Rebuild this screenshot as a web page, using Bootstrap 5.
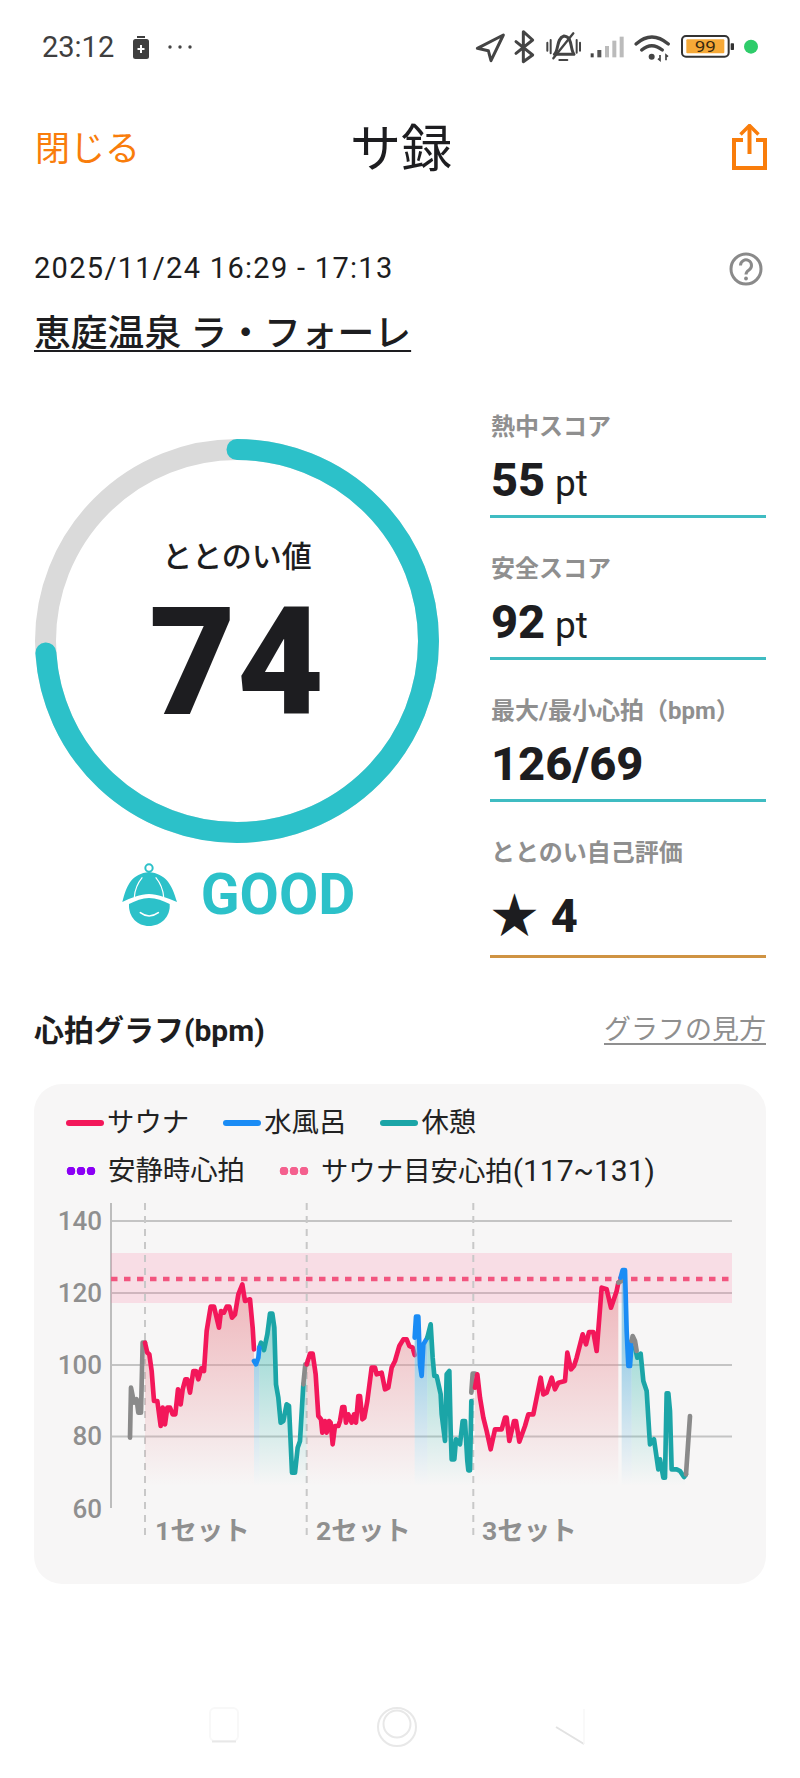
<!DOCTYPE html>
<html lang="ja"><head><meta charset="utf-8">
<title>サ録</title>
<link rel="stylesheet" href="https://cdn.jsdelivr.net/npm/bootstrap@5.3.0/dist/css/bootstrap.min.css">
<script src="https://cdn.jsdelivr.net/npm/bootstrap@5.3.0/dist/js/bootstrap.bundle.min.js"></script>
<style>
:root{--jp:Roboto,"Noto Sans CJK JP",sans-serif;--ink:#1d1d20;--teal:#2cc1c9;--orange:#f97d0b;--mute:#8f8f8f}
body{margin:0;background:#fff;font-family:var(--jp);color:var(--ink)}
.phone{width:800px;height:1778px;overflow:hidden}
.statusbar{height:94px;padding:0 20px 0 42px}
.status-left{gap:18px}
.clock{font-size:29px;color:#3f3f3f;line-height:1}
.status-right{margin-top:6px}
.topbar{height:106px;padding:4px 33px 0 35px}
.close-link{font-size:35px;color:var(--orange);line-height:1;width:130px}
.page-title{font-size:51px;font-weight:400;line-height:1;margin:0}
.top-spacer{width:130px;margin-top:-4px}
.session{padding:0 34px}
.date-row{height:40px;margin-top:49px;font-size:29px;letter-spacing:1.3px}
.help-icon{margin-right:3px}
.place{font-size:36.8px;font-weight:500;line-height:50px;margin-top:20px;text-decoration:underline;text-underline-offset:4px;text-decoration-thickness:2px;color:var(--ink)}
.score-row{margin-top:47px;padding:0 34px 0 35px}
.gauge-col{width:404px;padding-top:33px}
.gauge{width:404px;height:404px;padding-top:98px}
.gauge-ring{position:absolute;inset:0}
.gauge-label{font-size:30px;font-weight:500;line-height:40px}
.gauge-num{font-size:150px;font-weight:900;line-height:110px;margin-top:31px;letter-spacing:1px}
.verdict{margin-top:19px;height:65px;gap:22px;color:var(--teal);font-size:57px;font-weight:700;line-height:1}
.stat-col{width:276px;margin-top:1px}
.stat{margin-bottom:31px;border-bottom:3px solid #3fbcc2}
.stat-last{border-bottom-color:#cf9343;margin-bottom:0}
.stat-label{color:var(--mute);font-size:24px;font-weight:700;line-height:40px;padding-left:1px}
.stat-value{font-size:47px;font-weight:800;height:68px;line-height:66px;padding-left:1px}
.stat-last .stat-value{height:82px;line-height:86px}
.stat-star{margin-right:1px}
.stat-unit{font-size:37px;font-weight:400;margin-left:-2px}
.graph-head{padding:0 34px;margin-top:52px;height:40px}
.graph-title{font-size:30px;font-weight:700}
.graph-help{font-size:27px;color:var(--mute);text-decoration:underline;text-underline-offset:4px}
.graph-card{margin:34px 34px 0;height:500px;background:#f7f6f6;border-radius:28px;padding-top:19px}
.legend-row{height:40px;padding-left:32px;margin-bottom:8px;font-size:27.4px;color:#222;line-height:40px}
.legend-row:last-of-type{margin-bottom:0}
.key{gap:3px}
.key-wide{gap:12px}
.key-gap{column-gap:34px}
.legend-num{font-size:30px}
.swatch{display:block;width:38px;height:6px;border-radius:3px}
.dots{display:block;width:30px;height:8px;background-size:10px 8px;background-repeat:repeat-x}
.dots-purple{background-image:radial-gradient(circle,#8a00f5 4.2px,transparent 4.6px)}
.dots-pink{background-image:radial-gradient(circle,#f4608e 4.2px,transparent 4.6px)}
.chart{display:block;width:732px;height:360px}
.softkeys{margin-top:123px;height:40px;width:800px}
.axis{font-family:Roboto,sans-serif;font-size:26px;font-weight:500;fill:#8f8f8f;text-anchor:end}
.setlabel{font-family:Roboto,"Noto Sans CJK JP",sans-serif;font-size:26.5px;font-weight:700;fill:#8f8f8f}
.l{fill:none;stroke-width:14;stroke-linejoin:round;stroke-linecap:round}
.red{stroke:#f3175a}.tealc{stroke:#1ba5a7}.blue{stroke:#1a8cf5}.gray{stroke:#8a8a8a}
</style></head>
<body>
<div class="phone d-flex flex-column">

<div class="statusbar d-flex align-items-center justify-content-between">
 <div class="status-left d-flex align-items-center">
  <span class="clock">23:12</span>
  <svg width="18" height="23" viewBox="0 0 18 23" aria-hidden="true"><rect x="5" y="0" width="8" height="2" fill="#3f3f3f"/><rect x="1" y="3" width="16" height="20" rx="2.5" fill="#3f3f3f"/><path d="M9 9v8M5.500 13h7" stroke="#fff" stroke-width="2"/></svg>
  <svg width="24" height="4" viewBox="0 0 24 4" aria-hidden="true"><circle cx="2" cy="2" r="1.700" fill="#444"/><circle cx="12" cy="2" r="1.700" fill="#444"/><circle cx="22" cy="2" r="1.700" fill="#444"/></svg>
 </div>
 <svg class="status-right" width="320" height="60" viewBox="0 0 960 180" aria-hidden="true">
  <g fill="none" stroke="#444" stroke-width="9" stroke-linejoin="round" stroke-linecap="round">
   <path d="M52 85L130 45L93 122L85 92Z"/>
   <path d="M168 65L218 105L190 125V35L218 60L168 100"/>
   <path d="M283 103C297 92 288 55 312 48C338 50 330 88 342 103Z"/>
   <path d="M280 115L340 40" stroke-width="7"/>
   <path d="M262 68V92M272 60V100M350 60V98M360 68V92M298 120H322" stroke-width="6"/>
   <path d="M528 72Q575 30 625 72M545 90Q575 64 607 90" stroke-width="10"/>
  </g>
  <circle cx="575" cy="110" r="9" fill="#444"/>
  <path d="M600 105v16l-6-5M618 121v-16l6 5" stroke="#444" stroke-width="5" fill="none"/>
  <rect x="392" y="100" width="9" height="12" fill="#444"/><rect x="412" y="90" width="12" height="22" fill="#555"/>
  <rect x="435" y="78" width="12" height="34" fill="#bbb"/><rect x="457" y="62" width="12" height="50" fill="#bbb"/><rect x="479" y="50" width="12" height="62" fill="#bbb"/>
  <rect x="666" y="48" width="140" height="62" rx="12" fill="none" stroke="#333" stroke-width="6"/>
  <rect x="679" y="58" width="114" height="42" rx="3" fill="#f6a937"/>
  <text x="736" y="95" font-family="Roboto,sans-serif" font-size="44" fill="#3a2a10" text-anchor="middle" textLength="64" lengthAdjust="spacingAndGlyphs">99</text>
  <rect x="812" y="70" width="10" height="20" rx="2" fill="#333"/>
  <circle cx="873" cy="80" r="21" fill="#2ecc6a"/>
 </svg>
</div>

<header class="topbar d-flex align-items-center justify-content-between">
 <a class="close-link text-decoration-none">閉じる</a>
 <h1 class="page-title">サ録</h1>
 <div class="top-spacer d-flex justify-content-end">
  <svg width="35" height="46" viewBox="0 0 35 46" fill="none" stroke="#f97d0b" stroke-width="4" aria-hidden="true"><path d="M11 16H2V44H33V16H24"/><path d="M17.500 30V3"/><path d="M8.500 10.500L17.500 1.500L26.500 10.500" stroke-width="3.500"/></svg>
 </div>
</header>

<section class="session">
 <div class="date-row d-flex align-items-center justify-content-between">
  <span>2025/11/24 16:29 - 17:13</span>
  <svg class="help-icon" width="34" height="34" viewBox="0 0 34 34" aria-hidden="true"><circle cx="17" cy="17" r="15" fill="none" stroke="#8a8a8a" stroke-width="3"/><path d="M11.500 13.500a5.500 5.500 0 1 1 8.500 4.500c-2 1.300-3 2-3 4.500" fill="none" stroke="#8a8a8a" stroke-width="3"/><circle cx="17" cy="26.500" r="1.900" fill="#8a8a8a"/></svg>
 </div>
 <div class="place">恵庭温泉 ラ・フォーレ</div>
</section>

<section class="score-row d-flex justify-content-between">
 <div class="gauge-col">
  <div class="gauge position-relative text-center">
   <svg class="gauge-ring" viewBox="0 0 404 404" aria-hidden="true">
    <circle cx="202" cy="202" r="191.500" fill="none" stroke="#dadada" stroke-width="21"/>
    <circle cx="202" cy="202" r="191.500" fill="none" stroke="#2cc1c9" stroke-width="21" stroke-linecap="round" pathLength="100" stroke-dasharray="74 26" transform="rotate(-90 202 202)"/>
   </svg>
   <div class="gauge-label">ととのい値</div>
   <div class="gauge-num">74</div>
  </div>
  <div class="verdict d-flex align-items-center justify-content-center">
   <svg width="60" height="65" viewBox="60 60 180 195" aria-hidden="true">
    <circle cx="150" cy="78" r="11" fill="none" stroke="#2cc1c9" stroke-width="6"/>
    <path d="M70 180C84 125 100 96 150 90C200 96 218 125 234 180C205 168 175 156 150 156C125 156 95 168 70 180Z" fill="#2cc1c9"/>
    <path d="M106 165C108 140 120 118 130 106M194 165C192 140 180 118 170 106" stroke="#fff" stroke-width="3.500" fill="none"/>
    <path d="M90 186C110 176 130 168 150 168C172 168 192 176 212 186C215 225 185 252 150 252C115 252 88 225 90 186Z" fill="#2cc1c9"/>
    <path d="M124 212Q150 232 178 212" stroke="#fff" stroke-width="5" fill="none" stroke-linecap="round"/>
   </svg>
   <span>GOOD</span>
  </div>
 </div>
 <div class="stat-col">
  <div class="stat"><div class="stat-label">熱中スコア</div><div class="stat-value">55 <span class="stat-unit">pt</span></div></div>
  <div class="stat"><div class="stat-label">安全スコア</div><div class="stat-value">92 <span class="stat-unit">pt</span></div></div>
  <div class="stat"><div class="stat-label">最大/最小心拍（bpm）</div><div class="stat-value">126/69</div></div>
  <div class="stat stat-last"><div class="stat-label">ととのい自己評価</div><div class="stat-value"><span class="stat-star">★</span> 4</div></div>
 </div>
</section>

<div class="graph-head d-flex align-items-center justify-content-between">
 <span class="graph-title">心拍グラフ(bpm)</span>
 <span class="graph-help">グラフの見方</span>
</div>

<section class="graph-card">
 <div class="legend-row d-flex align-items-center key-gap">
  <span class="key d-flex align-items-center"><i class="swatch" style="background:#f3175a"></i>サウナ</span>
  <span class="key d-flex align-items-center"><i class="swatch" style="background:#1a8cf5"></i>水風呂</span>
  <span class="key d-flex align-items-center"><i class="swatch" style="background:#1ba5a7"></i>休憩</span>
 </div>
 <div class="legend-row d-flex align-items-center key-gap">
  <span class="key-wide d-flex align-items-center"><i class="dots dots-purple"></i>安静時心拍</span>
  <span class="key-wide d-flex align-items-center"><i class="dots dots-pink"></i><span>サウナ目安心拍<span class="legend-num">(117~131)</span></span></span>
 </div>
 <svg class="chart" viewBox="34 1190 732 360" role="img" aria-label="心拍グラフ">
  <defs>
   <linearGradient id="gr" gradientUnits="userSpaceOnUse" x1="0" y1="470" x2="0" y2="1065"><stop offset="0" stop-color="#e98f97" stop-opacity=".62"/><stop offset="1" stop-color="#e98f97" stop-opacity="0"/></linearGradient>
   <linearGradient id="gt" gradientUnits="userSpaceOnUse" x1="0" y1="600" x2="0" y2="1065"><stop offset="0" stop-color="#4dc0b8" stop-opacity=".55"/><stop offset="1" stop-color="#4dc0b8" stop-opacity="0"/></linearGradient>
   <linearGradient id="gb" gradientUnits="userSpaceOnUse" x1="0" y1="650" x2="0" y2="1065"><stop offset="0" stop-color="#62b4dc" stop-opacity=".6"/><stop offset="1" stop-color="#62b4dc" stop-opacity="0"/></linearGradient>
  </defs>
  <path d="M111 1220H732M111 1292H732M111 1364H732M111 1435.500H732" stroke="#c4c4c4" stroke-width="2"/>
  <path d="M111 1202V1507" stroke="#bdbdbd" stroke-width="2"/>
  <rect x="111" y="1252" width="621" height="50" fill="#ff7fa5" fill-opacity=".2"/>
  <path d="M111 1278H732" stroke="#f2557f" stroke-width="4.500" stroke-dasharray="6.500 6.500"/>
  <path d="M145 1202V1535M306.700 1202V1535M473.300 1202V1535" stroke="#c8c8c8" stroke-width="2" stroke-dasharray="7 6"/>
  <text class="axis" x="102" y="1229">140</text><text class="axis" x="102" y="1301">120</text><text class="axis" x="102" y="1373">100</text><text class="axis" x="102" y="1444">80</text><text class="axis" x="102" y="1517">60</text>
  <text class="setlabel" x="155" y="1539">1セット</text><text class="setlabel" x="316" y="1539">2セット</text><text class="setlabel" x="482" y="1539">3セット</text>

  <g transform="translate(30 1130) scale(.33333)">
   <polygon fill="url(#gr)" points="345,635 352,665 358,670 365,720 372,810 382,810 392,885 398,830 405,880 412,830 420,830 428,850 436,850 444,775 452,820 458,775 466,745 472,745 480,785 490,720 498,720 505,745 514,712 522,720 530,600 542,527 552,527 567,590 573,540 582,545 590,527 598,527 606,560 615,550 625,490 637,460 645,510 660,505 668,590 672,655 672,1065 345,1065"/>
   <polygon fill="url(#gb)" points="672,690 678,700 685,680 688,650 688,1065 672,1065"/>
   <polygon fill="url(#gt)" points="688,650 693,635 702,657 712,610 720,548 727,548 733,590 738,760 745,800 752,875 760,870 770,820 777,825 786,1025 795,1025 803,950 810,930 820,760 825,710 830,700 830,1065 688,1065"/>
   <polygon fill="url(#gr)" points="830,700 840,668 848,668 857,730 865,855 873,865 877,905 885,870 890,905 897,870 902,875 908,940 915,885 925,885 930,870 937,828 943,828 948,875 955,850 965,875 972,850 978,875 985,795 990,795 997,865 1003,860 1012,810 1025,710 1035,710 1040,730 1055,725 1065,775 1075,770 1085,710 1095,690 1108,645 1120,625 1130,625 1138,645 1148,650 1154,672 1154,1065 830,1065"/>
   <polyline class="l gray" points="300,920 303,770 312,815 320,805 325,845 333,845 338,635 345,635"/>
   <polyline class="l red" points="345,635 352,665 358,670 365,720 372,810 382,810 392,885 398,830 405,880 412,830 420,830 428,850 436,850 444,775 452,820 458,775 466,745 472,745 480,785 490,720 498,720 505,745 514,712 522,720 530,600 542,527 552,527 567,590 573,540 582,545 590,527 598,527 606,560 615,550 625,490 637,460 645,510 660,505 668,590 672,655"/>
   <polyline class="l tealc" points="688,650 693,635 702,657 712,610 720,548 727,548 733,590 738,760 745,800 752,875 760,870 770,820 777,825 786,1025 795,1025 803,950 810,930 820,760"/>
   <polyline class="l blue" points="672,690 678,700 685,680 688,650"/>
   <polyline class="l gray" points="820,760 826,700 832,700"/>
   <polyline class="l red" points="830,700 840,668 848,668 857,730 865,855 873,865 877,905 885,870 890,905 897,870 902,875 908,940 915,885 925,885 930,870 937,828 943,828 948,875 955,850 965,875 972,850 978,875 985,795 990,795 997,865 1003,860 1012,810 1025,710 1035,710 1040,730 1055,725 1065,775 1075,770 1085,710 1095,690 1108,645 1120,625 1130,625 1138,645 1148,650 1154,672"/>
  </g>

  <g transform="translate(400 1130) scale(.33333)">
   <polygon fill="url(#gb)" points="44,620 48,557 55,557 60,700 65,735 70,640 82,620 82,1065 44,1065"/>
   <polygon fill="url(#gt)" points="82,620 92,580 98,680 103,735 110,735 122,790 125,850 135,930 140,730 148,720 152,900 155,985 163,985 168,925 180,940 188,870 195,870 202,990 205,1018 210,1018 214,810 214,1065 82,1065"/>
   <polygon fill="url(#gr)" points="225,770 232,730 240,800 250,860 260,900 272,955 285,895 305,895 315,860 320,860 328,930 342,870 348,870 358,932 375,885 385,850 400,850 410,800 422,740 430,790 440,785 455,740 465,775 475,755 495,750 502,665 513,715 522,705 530,680 548,610 558,640 567,603 580,603 590,660 605,470 620,475 633,530 650,480 655,455 655,1065 225,1065"/>
   <polygon fill="url(#gb)" points="665,450 668,417 675,417 680,600 685,705 690,705 695,630 695,1065 665,1065"/>
   <polygon fill="url(#gt)" points="695,630 705,650 712,680 722,668 730,750 740,780 748,910 750,940 762,925 775,1015 780,985 790,1040 795,1040 800,787 805,787 810,840 815,1015 830,1015 840,1020 852,1038 858,1065 695,1065"/>
   <polyline class="l blue" points="44,620 48,557 55,557 60,700 65,735 70,640 82,620"/>
   <polyline class="l tealc" points="82,620 92,580 98,680 103,735 110,735 122,790 125,850 135,930 140,730 148,720 152,900 155,985 163,985 168,925 180,940 188,870 195,870 202,990 205,1018 210,1018 214,810"/>
   <polyline class="l gray" points="214,785 218,728 225,728"/>
   <polyline class="l red" points="225,770 232,730 240,800 250,860 260,900 272,955 285,895 305,895 315,860 320,860 328,930 342,870 348,870 358,932 375,885 385,850 400,850 410,800 422,740 430,790 440,785 455,740 465,775 475,755 495,750 502,665 513,715 522,705 530,680 548,610 558,640 567,603 580,603 590,660 605,470 620,475 633,530 650,480 655,455"/>
   <polyline class="l gray" points="655,455 665,450"/>
   <polyline class="l tealc" points="705,650 712,680 722,668 730,750 740,780 748,910 750,940 762,925 775,1015 780,985 790,1040 795,1040 800,787 805,787 810,840 815,1015 830,1015 840,1020 852,1038 858,1030"/>
   <polyline class="l blue" points="662,440 668,417 675,417 680,600 685,705 690,705 695,630"/>
   <polyline class="l gray" points="695,630 698,615 705,630 710,660"/>
   <polyline class="l gray" points="858,1030 870,855"/>
  </g>
 </svg>
</section>

<svg class="softkeys" viewBox="0 1710 800 40" aria-hidden="true">
 <rect x="210" y="1711" width="28" height="33" rx="5" fill="none" stroke="#f8f8f8" stroke-width="2"/>
 <path d="M212 1744.500H236" stroke="#e8e8e8" stroke-width="2"/>
 <circle cx="397" cy="1730" r="19" fill="none" stroke="#e8e8e8" stroke-width="2"/>
 <circle cx="397" cy="1727" r="13.500" fill="none" stroke="#e8e8e8" stroke-width="2"/>
 <path d="M556 1730L584 1747" stroke="#e2e2e2" stroke-width="2"/>
 <path d="M584 1712V1747" stroke="#f7f7f7" stroke-width="1.500"/>
</svg>
</div>
</body></html>
